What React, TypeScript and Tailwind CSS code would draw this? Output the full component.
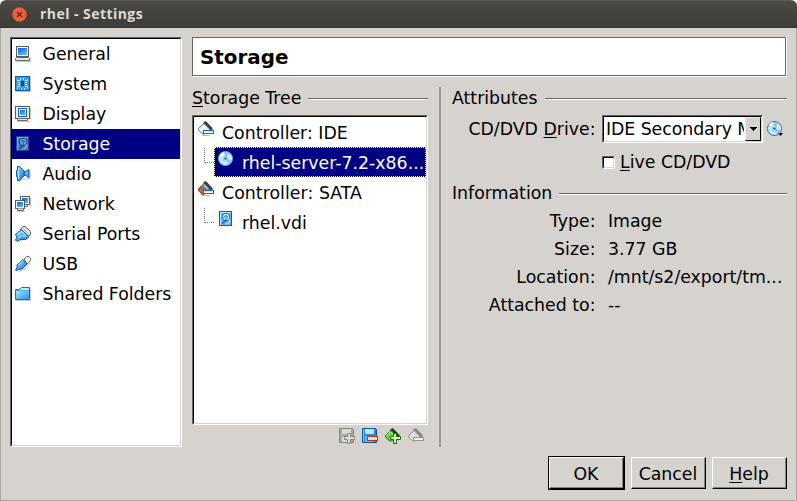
import type { ReactNode } from "react";

function Icon({ children }: { children: ReactNode }) {
  return (
    <svg width="16" height="16" viewBox="0 0 16 16" className="block shrink-0">
      <defs>
        <linearGradient id="blue" x1="0" y1="0" x2="1" y2="1">
          <stop offset="0" stopColor="#9bdcff" />
          <stop offset="1" stopColor="#0f72e0" />
        </linearGradient>
        <linearGradient id="screen" x1="0" y1="0" x2="0.6" y2="1">
          <stop offset="0" stopColor="#0a5fe0" />
          <stop offset="1" stopColor="#5ab4ff" />
        </linearGradient>
        <linearGradient id="folder" x1="0" y1="0" x2="1" y2="1">
          <stop offset="0" stopColor="#b5e8ff" />
          <stop offset="1" stopColor="#1f97f2" />
        </linearGradient>
      </defs>
      {children}
    </svg>
  );
}

const GeneralIcon = () => (
  <Icon>
    <path d="M2 15.5h14M15.5 12v3" stroke="#c4c4be" />
    <rect x="1.5" y=".5" width="12" height="10" fill="#fff" stroke="#55575a" />
    <rect x="3" y="2" width="9" height="7" fill="url(#screen)" />
    <path d="M1.5 11.5h12l1 1v2H.5v-2z" fill="#e6e6de" stroke="#66685f" />
  </Icon>
);
const SystemIcon = () => (
  <Icon>
    <path d="M1 15.5h15M15.5 1v14" stroke="#bcc4cc" />
    <rect x=".5" y=".5" width="14" height="14" fill="#2f9bf5" stroke="#075fb5" />
    <path d="M3 4.5h2M3 6.5h2M3 8.5h2M3 10.5h2M10 4.5h2M10 6.5h2M10 8.5h2M10 10.5h2M5.5 2v2M8.5 2v2M6.5 12v2M9.5 12v2" stroke="#d4f1ff" />
    <path d="M2.5 3v2M12.5 3v2M2.5 10v3M12.5 10v3" stroke="#86ceff" />
    <rect x="6" y="5" width="3" height="5" fill="#353b42" />
  </Icon>
);
const DisplayIcon = () => (
  <Icon>
    <path d="M2 15.5h13M15.5 2v11" stroke="#c6c6be" />
    <rect x=".5" y=".5" width="14" height="12" fill="#efefe9" stroke="#55575a" />
    <rect x="3" y="2" width="9" height="9" fill="#0b60dc" />
    <rect x="4" y="3" width="7" height="7" fill="#fff" />
    <rect x="5" y="4" width="5" height="5" fill="url(#screen)" />
    <path d="M2.5 12.5h10v2h-10z" fill="#e6e6de" stroke="#66685f" />
  </Icon>
);
const DiskIcon = ({ dim = false }: { dim?: boolean }) => (
  <Icon>
    <rect x="1.5" y=".5" width="12" height="14" fill={dim ? "#497fcd" : "#65b7fa"} stroke={dim ? "#164794" : "#075cb7"} />
    <path d="M2.5 14V1.5H13" fill="none" stroke={dim ? "#7fa9e4" : "#bce8ff"} />
    <circle cx="8" cy="6" r="3.8" fill={dim ? "#7aaae5" : "#c8edff"} stroke={dim ? "#173e83" : "#086bc6"} />
    <path d="M5.5 6.5 8 4.5l1.5 1L8 7.5V10l-3.5 2.5M7 9.5l-3 3" fill="none" stroke={dim ? "#15397b" : "#075cb7"} />
    <path d="M11.5 8.5V11l-3 2" fill="none" stroke={dim ? "#a0c3f1" : "#e7faff"} />
  </Icon>
);
const AudioIcon = () => (
  <Icon>
    <path d="M4 15.5 9 13h6V5" fill="none" stroke="#b5c0cb" />
    <path d="M9 5.5h2l2-2h1v8h-1l-2-2H9z" fill="#389df0" stroke="#1467b8" />
    <path d="M1.5 4.5h1V.5h2l4.500 4.500v5L4.500 14.5h-2v-4h-1z" fill="url(#blue)" stroke="#095db6" />
    <path d="M3.5 2v11" stroke="#c2eaff" />
    <path d="M10 7h3" stroke="#a1dbff" />
  </Icon>
);
const NetworkIcon = () => (
  <Icon>
    <path d="M2 15.5h8M15.5 2v9" stroke="#c6c6be" />
    <rect x="5.5" y=".5" width="9" height="8" fill="#fff" stroke="#55575a" />
    <rect x="7" y="2" width="6" height="5" fill="url(#screen)" />
    <path d="M9.5 10.5h3v-2" fill="none" stroke="#66685f" />
    <rect x=".5" y="4.5" width="9" height="8" fill="#fff" stroke="#55575a" />
    <rect x="2" y="6" width="6" height="5" fill="url(#screen)" />
    <path d="M2.5 12.5v2h6v-2" fill="#e6e6de" stroke="#66685f" />
  </Icon>
);
const SerialIcon = () => (
  <Icon>
    <path d="M4 15.5 14.5 9" stroke="#bbc1c7" />
    <path d="m5 4 3-3.5h2l5.500 5V8L13 11z" fill="#f4f4ee" stroke="#4b5056" />
    <path d="m8 2.500 5.500 5" stroke="#9a9fa3" />
    <path d="m.5 8.500 6-5 7.500 7-3 3H5L2 15.500.5 14l1.500-3z" fill="url(#blue)" stroke="#075cae" />
    <path d="m2.500 8.500 4-3 5 5M3.500 12l3-3 4 2" fill="none" stroke="#c6efff" />
  </Icon>
);
const UsbIcon = () => (
  <Icon>
    <path d="M4 15.5 10 13l5-6" fill="none" stroke="#c0c4c9" />
    <path d="m9 3 3-2.500h2l1.500 2v2L12 8z" fill="#fff" stroke="#62676a" />
    <path d="M8 3.500 12 8l-5 5-4 .5L1.500 15 .5 14l1.500-2V9z" fill="url(#blue)" stroke="#075cb5" />
    <path d="M3.500 9 8 5" stroke="#c8efff" />
  </Icon>
);
const FolderIcon = () => (
  <Icon>
    <path d="M1 14.5h15M15.5 3v11" stroke="#bec8d0" />
    <path d="M.5 13.500v-10h4l2-2h8v12z" fill="#bfe9ff" stroke="#1671bd" />
    <path d="M1 4h13v9H1z" fill="url(#folder)" />
    <path d="M1 4.500h12.500v-1" fill="none" stroke="#5aafec" />
  </Icon>
);
const DiscIcon = ({ arrow = false }: { arrow?: boolean }) => (
  <Icon>
    <circle cx="7.500" cy="7.500" r="7" fill="#cceaff" stroke={arrow ? "#2864bd" : "#78a8dd"} />
    <path d="M7.500 7.500 2 4A7 7 0 0 1 6 1z" fill="#fff" />
    <path d="M7.500 7.500 6 1a7 7 0 0 1 5 1z" fill="#99bdf5" />
    <path d="m7.500 7.500 6 0A6 6 0 0 1 10 13z" fill="#8bc4f6" />
    <path d="M7.500 7.500 1.500 8A6 6 0 0 0 6 13.500z" fill="#b7f1dc" />
    <path d="M7.500 7.500 13.300 5A6 6 0 0 1 13.500 9z" fill="#eef2ff" />
    <circle cx="7.500" cy="7.500" r="2.500" fill="#dff4ff" stroke="#7ac5ef" />
    <circle cx="7.500" cy="7.500" r="1.200" fill="#0759bc" />
    {arrow && <path d="M11 12h5l-2.500 3z" fill="#000" />}
  </Icon>
);
const ControllerIcon = ({ sata = false }: { sata?: boolean }) => (
  <Icon>
    <path d="M4.500 14.500h7" stroke="#b8b8b4" />
    <path d="M5 2 7 .3h1L14.500 7v2H11z" fill="#3b3d3e" />
    <path d="M.5 7.500 6 2.500l6 6-5.500 4.500h-2L.5 9z" fill={sata ? "#777d80" : "#f3f4f3"} stroke="#696e71" />
    {sata && <path d="m6 4 4 4" stroke="#c7cbcd" strokeWidth="1.500" />}
    {sata && <path d="m.5 9 2-2.500L6 10v3l-1.500 1z" fill="#ef5a3e" stroke="#b52e1d" />}
    <rect x="5.500" y="9.500" width="10" height="3" fill="#d9f6ff" stroke="#086fca" />
    <path d="M7 11h8" stroke="#fff" />
  </Icon>
);
const SaveAddIcon = () => (
  <Icon>
    <path d="M.5.5h13l1 1v13H.5z" fill="#aaa9a4" stroke="#85857f" />
    <path d="M3 1h9v5H3zM3 9h7v5H3z" fill="#dad9d3" />
    <path d="M8.500 5.500h3v3h4v3h-4v4h-3v-4h-3v-3h3z" fill="#dedcd6" stroke="#85857f" />
  </Icon>
);
const SaveRemoveIcon = () => (
  <Icon>
    <path d="M.5.5h13l1 1v13H.5z" fill="#2189ef" stroke="#0756af" />
    <path d="M3 1h9v5H3z" fill="#b8eaff" />
    <path d="M3 8h8v6H3z" fill="#73bff9" />
    <path d="M1.500 1.500v12" stroke="#83ccff" />
    <rect x="5.500" y="8.500" width="10" height="4" fill="#ffd5bf" stroke="#b73320" />
    <path d="M7 10h8" stroke="#fff3e8" />
  </Icon>
);
const ControllerAddIcon = () => (
  <Icon>
    <path d="M5 2 7 .3h1L14.500 7v2H11z" fill="#223c19" />
    <path d="M.5 7.500 6 2.500l6 6-5.500 4.500h-2L.5 9z" fill="#6fd52e" stroke="#237b10" />
    <path d="m2 7.500 3.500-3.500L9 7" fill="none" stroke="#c9fa9b" />
    <path d="M8.500 5.500h3v3h4v3h-4v4h-3v-4h-3v-3h3z" fill="#baf683" stroke="#197204" />
    <path d="M10 7v8M7 10h8" stroke="#efffd9" />
  </Icon>
);
const ControllerRemoveIcon = () => (
  <Icon>
    <path d="M5 2 7 .3h1L14.500 7v2H11z" fill="#85847f" />
    <path d="M.5 7.500 6 2.500l6 6-5.500 4.500h-2L.5 9z" fill="#dddcd7" stroke="#96958f" />
    <rect x="5.500" y="9.500" width="10" height="3" fill="#eeece7" stroke="#96958f" />
  </Icon>
);

const categories = [
  { name: "General", icon: <GeneralIcon /> },
  { name: "System", icon: <SystemIcon /> },
  { name: "Display", icon: <DisplayIcon /> },
  { name: "Storage", icon: <DiskIcon dim /> },
  { name: "Audio", icon: <AudioIcon /> },
  { name: "Network", icon: <NetworkIcon /> },
  { name: "Serial Ports", icon: <SerialIcon /> },
  { name: "USB", icon: <UsbIcon /> },
  { name: "Shared Folders", icon: <FolderIcon /> },
];

function Sunken({ className, children }: { className: string; children: ReactNode }) {
  return (
    <div className={`border border-t-[#666660] border-l-[#666660] border-r-white border-b-white ${className}`}>
      <div className="h-full w-full border border-t-black border-l-black border-r-[#d6d2cd] border-b-[#d6d2cd] bg-white">
        {children}
      </div>
    </div>
  );
}

function Section({ children }: { children: ReactNode }) {
  return (
    <div className="flex h-[22px] items-center gap-[7px] leading-[22px]">
      <span>{children}</span>
      <div className="mt-[2px] h-[2px] flex-1 border-t border-b border-t-[#666660] border-b-white" />
    </div>
  );
}

function Key({ children }: { children: ReactNode }) {
  return <span className="underline decoration-1 underline-offset-[2px]">{children}</span>;
}

function Branch() {
  return <div className="mt-[1px] ml-[10px] h-[15px] w-[10px] shrink-0 border-b border-l border-dotted border-[#777]" />;
}

function Button({ children }: { children: ReactNode }) {
  return (
    <button className="h-8 w-[75px] border border-t-white border-l-white border-r-black border-b-black">
      <span className="flex h-full w-full items-center justify-center border-r border-b border-[#85857c] pt-[5px]">
        <span>{children}</span>
      </span>
    </button>
  );
}

const information = [
  ["Type:", "Image"],
  ["Size:", "3.77 GB"],
  ["Location:", "/mnt/s2/export/tm..."],
  ["Attached to:", "--"],
];

export default function App() {
  return (
    <div className="flex h-[501px] w-[797px] flex-col overflow-hidden bg-white font-['DejaVu_Sans',sans-serif] text-[17.333px] text-black">
      <header className="flex h-7 shrink-0 items-center rounded-t-[6px] border-t border-b border-t-[#5a5952] border-b-[#32312d] bg-linear-to-b from-[#4b4a44] to-[#3d3c38] pl-[12px]">
        <svg width="16" height="16" viewBox="0 0 16 16" className="mt-px">
          <circle cx="7.500" cy="7.500" r="7.500" fill="#ef6037" stroke="#383732" strokeWidth=".5" />
          <path d="m5 5 5 5m0-5-5 5" stroke="#4b261b" strokeWidth="1.300" />
        </svg>
        <span className="-mt-px ml-3 font-['Open_Sans',sans-serif] text-[14px] font-bold tracking-[0.45px] text-[#dfdbd2]">rhel - Settings</span>
      </header>

      <main className="flex min-h-0 flex-1 flex-col border-r border-b border-l border-[#aaa6a1] bg-[#d6d2cd] pt-[9px] pr-[9px] pl-[9px]">
        <div className="flex h-[410px] shrink-0 gap-[10px]">
          <Sunken className="w-[172px] shrink-0">
            {categories.map(({ name, icon }) => (
              <div
                key={name}
                className={`flex h-[30px] items-center gap-[11.5px] pl-[3px] ${name === "Storage" ? "bg-[#000084] text-white" : ""}`}
              >
                {icon}
                <span className="pt-[2px] tracking-[-0.02px]">{name}</span>
              </div>
            ))}
          </Sunken>

          <div className="flex min-w-0 flex-1 flex-col">
            <div className="h-[40px] shrink-0 border-r border-b border-white">
              <h1 className="flex h-[39px] items-center border border-[#666660] bg-white pt-[2px] pl-[7px] text-[19.9px] font-bold">Storage</h1>
            </div>

            <div className="mt-[10px] flex h-[360px]">
              <section className="flex w-[236px] shrink-0 flex-col">
                <Section><Key>S</Key>torage Tree</Section>
                <Sunken className="mt-[6px] h-[310px] shrink-0">
                  <div className="flex h-[30px] gap-2 pt-[4px] pl-[4px]">
                    <ControllerIcon />
                    <span className="leading-[24px]">Controller: IDE</span>
                  </div>
                  <div className="flex h-[30px]">
                    <Branch />
                    <div className="flex min-w-0 flex-1 gap-2 border border-dotted border-[#ffff7b] bg-[#000084] pt-[3px] pl-[3px] text-white">
                      <DiscIcon />
                      <span className="leading-[24px] whitespace-nowrap">rhel-server-7.2-x86...</span>
                    </div>
                  </div>
                  <div className="flex h-[30px] gap-2 pt-[4px] pl-[4px]">
                    <ControllerIcon sata />
                    <span className="leading-[24px] tracking-[0.05px]">Controller: SATA</span>
                  </div>
                  <div className="flex h-[30px]">
                    <Branch />
                    <div className="flex gap-2 pt-[4px] pl-[4px]">
                      <DiskIcon />
                      <span className="leading-[24px]">rhel.vdi</span>
                    </div>
                  </div>
                </Sunken>
                <div className="mt-[3px] flex gap-[7px] pl-[147px]">
                  <SaveAddIcon />
                  <SaveRemoveIcon />
                  <ControllerAddIcon />
                  <ControllerRemoveIcon />
                </div>
              </section>

              <div className="ml-[11px] w-[2px] shrink-0 bg-[#999a8d]" />

              <section className="ml-[11px] flex min-w-0 flex-1 flex-col">
                <Section>Attributes</Section>
                <div className="mt-[6px] flex h-7 items-center">
                  <span className="w-[143.5px] pt-[2px] text-right whitespace-nowrap">CD/DVD <Key>D</Key>rive:</span>
                  <Sunken className="ml-[6.5px] h-7 w-[161px] shrink-0">
                    <div className="flex h-full">
                      <span className="w-[140px] overflow-hidden pl-[2px] leading-[24px] tracking-[-0.06px] whitespace-nowrap">IDE Secondary Master</span>
                      <div className="ml-auto flex w-4 shrink-0 items-center justify-center border border-t-[#eeeae4] border-l-[#eeeae4] border-r-black border-b-black bg-[#d6d2cd]">
                        <svg width="7" height="4" viewBox="0 0 7 4" shapeRendering="crispEdges" className="shrink-0"><path d="M0 0h7v1H6v1H5v1H4v1H3V3H2V2H1V1H0z" /></svg>
                      </div>
                    </div>
                  </Sunken>
                  <div className="ml-1"><DiscIcon arrow /></div>
                </div>
                <div className="mt-[7px] flex h-6 items-center pl-[150px]">
                  <Sunken className="h-[13px] w-[13px]">{null}</Sunken>
                  <span className="ml-[5px] pt-[2px]"><Key>L</Key>ive CD/DVD</span>
                </div>
                <div className="mt-[8px]"><Section>Information</Section></div>
                <dl className="mt-[4px]">
                  {information.map(([label, value]) => (
                    <div key={label} className="flex h-7 items-center">
                      <dt className="w-[143.5px] text-right">{label}</dt>
                      <dd className="ml-[12.5px] whitespace-nowrap">{value}</dd>
                    </div>
                  ))}
                </dl>
              </section>
            </div>
          </div>
        </div>

        <footer className="mt-[10px] flex justify-end gap-[6px]">
          <div className="-mt-px h-[34px] border border-black"><Button>OK</Button></div>
          <Button>Cancel</Button>
          <Button><Key>H</Key>elp</Button>
        </footer>
      </main>
    </div>
  );
}
